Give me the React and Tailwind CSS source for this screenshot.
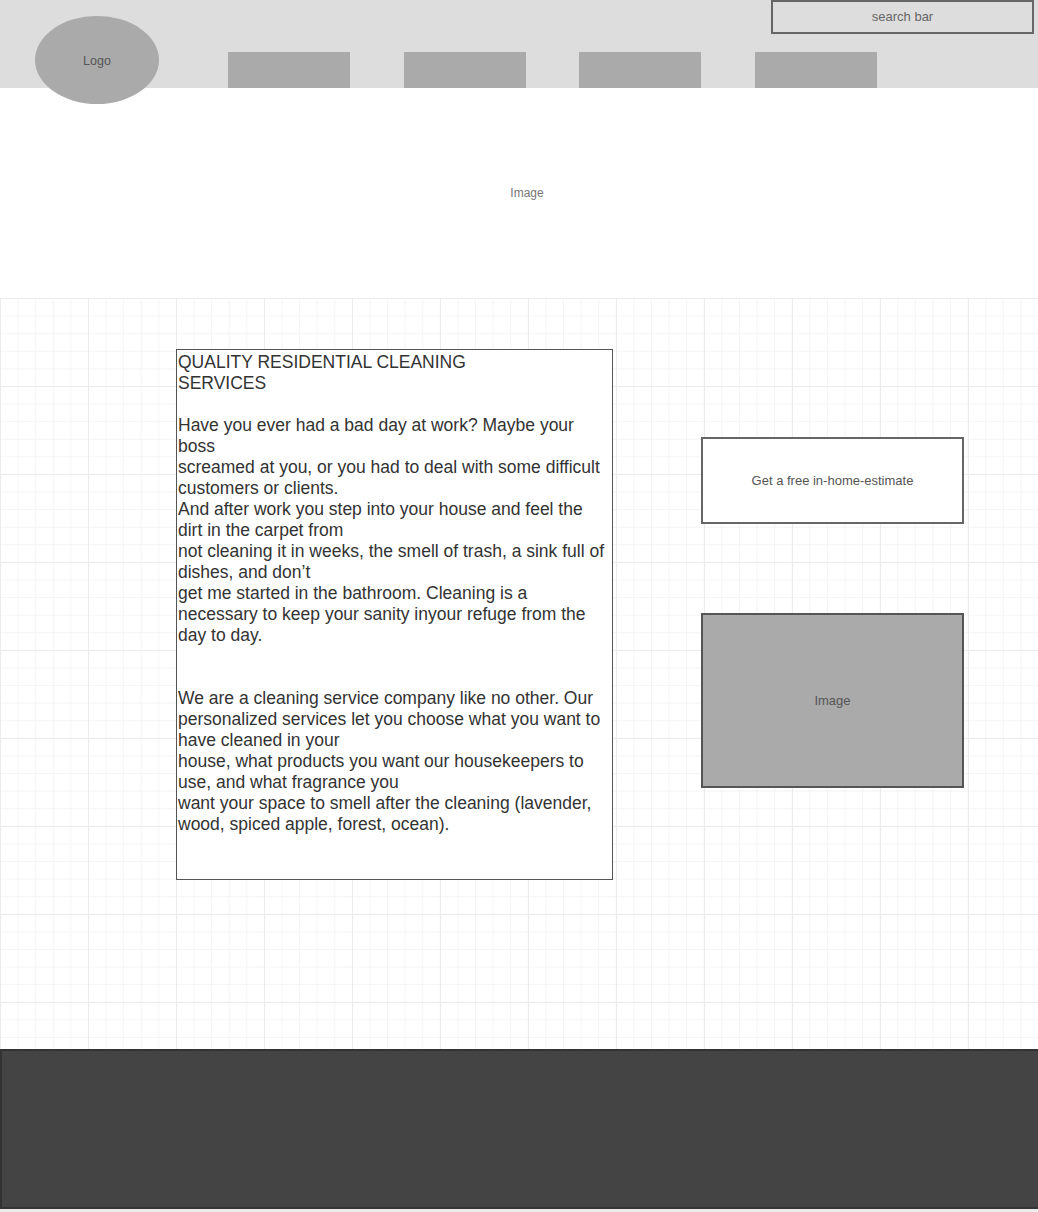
import React from 'react';

const navItems = ['home', 'services', 'about', 'contact'];

const intro = `Have you ever had a bad day at work? Maybe your boss
screamed at you, or you had to deal with some difficult customers or clients.
And after work you step into your house and feel the dirt in the carpet from
not cleaning it in weeks, the smell of trash, a sink full of dishes, and don’t
get me started in the bathroom. Cleaning is a necessary to keep your sanity inyour refuge from the day to day.`;

const pitch = `We are a cleaning service company like no other. Our personalized services let you choose what you want to have cleaned in your
house, what products you want our housekeepers to use, and what fragrance you
want your space to smell after the cleaning (lavender, wood, spiced apple, forest, ocean).`;

export default function App() {
    return (
        <div className="min-h-[1212px] w-full bg-white font-['Liberation_Sans',Arial,sans-serif]">

            {/* Header */}
            <header className="relative flex h-[88px] items-start bg-[#dddddd] pl-[35px]">
                <div className="relative z-10 mt-[16px] flex h-[88px] w-[124px] shrink-0 items-center justify-center rounded-[50%] bg-[#aaaaaa] pt-[2px] text-[12.5px] text-[#555555]">
                    Logo
                </div>
                <nav className="ml-[69px] flex h-full items-end gap-[53.5px]">
                    {navItems.map((item) => (
                        <div key={item} className="h-[36px] w-[122px] bg-[#aaaaaa]" />
                    ))}
                </nav>
                <div className="absolute right-[4px] top-0 flex h-[34px] w-[263px] items-center justify-center border-2 border-[#666666] text-[13px] text-[#666666]">
                    search bar
                </div>
            </header>

            {/* Hero image placeholder */}
            <section className="flex h-[210px] items-center justify-center pl-[16px] text-[12px] text-[#777777]">
                Image
            </section>

            {/* Content on grid */}
            <section className="flex h-[751px] items-start bg-white bg-[linear-gradient(to_right,#ececec_1px,transparent_1px),linear-gradient(to_bottom,#ececec_1px,transparent_1px),linear-gradient(to_right,#f4f4f4_1px,transparent_1px),linear-gradient(to_bottom,#f4f4f4_1px,transparent_1px)] bg-[size:88px_88px,88px_88px,17.6px_17.6px,17.6px_17.6px] pl-[176px] pt-[51px]">
                <article className="h-[531px] w-[437px] shrink-0 whitespace-pre-line border-[1.5px] border-[#555555] bg-white px-[1px] pt-[2px] text-[17.5px] leading-[21px] text-[#333333]">
                    <h1>QUALITY RESIDENTIAL CLEANING{'\n'}SERVICES</h1>
                    <p className="mt-[21px]">{intro}</p>
                    <p className="mt-[42px]">{pitch}</p>
                </article>

                <aside className="ml-[88px] flex w-[263px] flex-col pt-[88px]">
                    <button className="flex h-[87px] items-center justify-center border-2 border-[#666666] bg-white text-[13px] text-[#555555]">
                        Get a free in-home-estimate
                    </button>
                    <div className="mt-[89px] flex h-[175px] items-center justify-center border-2 border-[#555555] bg-[#aaaaaa] text-[13px] text-[#555555]">
                        Image
                    </div>
                </aside>
            </section>

            {/* Footer */}
            <footer className="h-[160px] border-y-2 border-l-2 border-[#333333] bg-[#444444]" />
            <div className="h-[3px] bg-[#ececec]" />
        </div>
    );
}
